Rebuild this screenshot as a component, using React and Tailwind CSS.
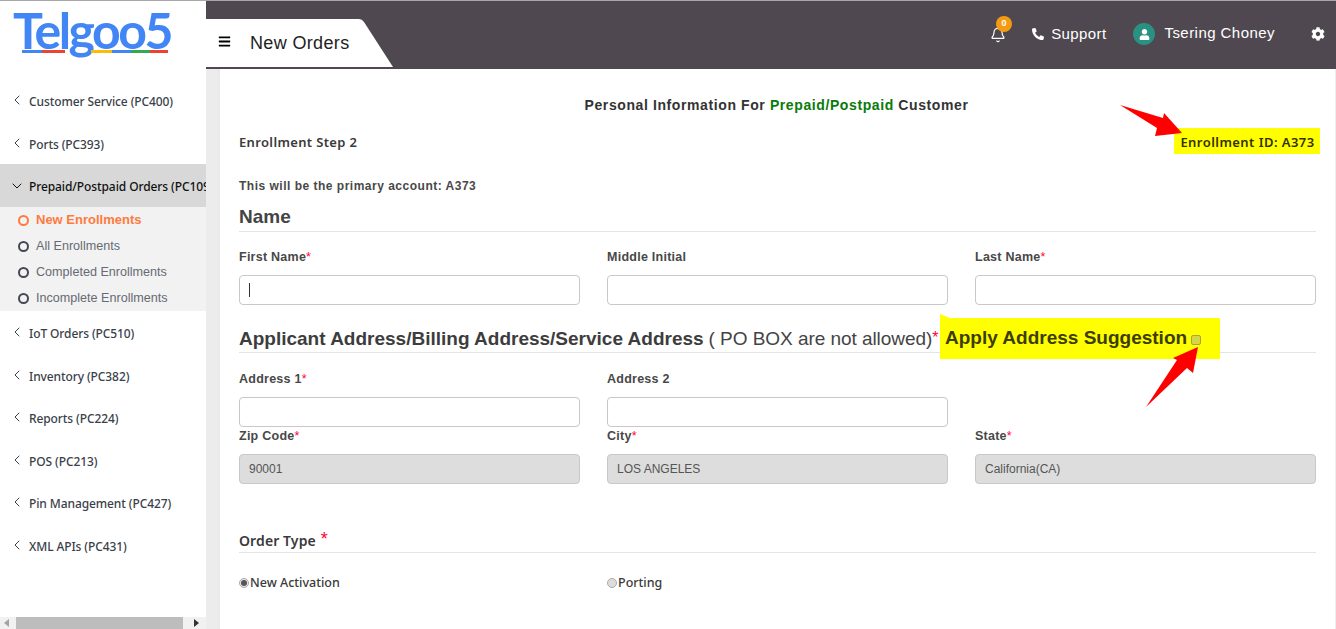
import React from "react";
import { ChevronLeft, ChevronDown, Bell } from "lucide-react";
import { FaBars, FaCog, FaPhoneAlt, FaUser } from "react-icons/fa";

const sans = "font-['Liberation_Sans',Arial,sans-serif]";
const noto = "font-['Noto_Sans',sans-serif]";

function NavItem({ label, open }) {
  return (
    <div className={`flex items-center shrink-0 ${open ? "h-[43px] bg-[#d8d8d8] text-[#111111]" : "h-[42.5px] text-[#3a3f4a]"} pl-[9px] whitespace-nowrap overflow-hidden`}>
      {open ? <ChevronDown size={16} strokeWidth={1.5} className="shrink-0" /> : <ChevronLeft size={16} strokeWidth={1.5} className="shrink-0" />}
      <span className={`${noto} ml-[4px] ${open ? "pt-[2px]" : "pt-[4px]"} text-[12px] font-medium tracking-[-0.1px]`}>{label}</span>
    </div>
  );
}

function SubItem({ label, active }) {
  return (
    <div className={`flex items-center h-[26px] pl-[18px] ${sans} ${active ? "text-[13px] text-[#ff7a3d] font-bold" : "text-[12.6px] text-[#666a73]"}`}>
      <span className={`w-[11px] h-[11px] rounded-full border-2 mr-[7px] ${active ? "border-[#ff7a3d]" : "border-[#444852]"}`} />
      {label}
    </div>
  );
}

function Field({ label, req, value, disabled }) {
  return (
    <div>
      <label className={`block ${sans} text-[12.5px] font-bold tracking-[0.25px] text-[#484848] h-[19px] leading-[19px] mb-[8px]`}>
        {label}{req && <span className="text-[#f03] font-normal">*</span>}
      </label>
      <div className={`h-[30px] rounded-[4px] border border-[#c8c8c8] px-[9px] flex items-center ${sans} text-[12px] text-[#555555] ${disabled ? "bg-[#dddddd]" : "bg-white"}`}>
        {value}
      </div>
    </div>
  );
}

function Arrow({ className, points }) {
  return (
    <svg className={`absolute ${className}`} viewBox="0 0 70 70" width="70" height="70">
      <polygon points={points} fill="#ff0000" />
    </svg>
  );
}

export default function App() {
  return (
    <div className={`relative w-[1336px] h-[629px] overflow-hidden bg-white ${sans}`}>
      <div className="h-px bg-[#a8a8a8]" />
      <div className="flex h-[628px]">
        <aside className="w-[206px] shrink-0 flex flex-col bg-white">
          <div className="h-[78px] shrink-0 relative pl-[13px]">
            <div className="relative inline-block">
              <div className="font-['Lato',sans-serif] font-bold text-[50px] leading-[56px] tracking-[-2.5px] text-[#4285f4] pt-[1px]">Telgoo5</div>
              <div className="absolute left-[9px] top-[49px] flex h-[3px] w-[146px]">
                <span className="w-[20px] bg-[#4285f4]" />
                <span className="w-[23px] bg-[#ea4335]" />
                <span className="w-[26px]" />
                <span className="w-[21px] bg-[#fbbc05]" />
                <span className="w-[19px] bg-[#4285f4]" />
                <span className="w-[19px] bg-[#34a853]" />
                <span className="w-[18px] bg-[#ea4335]" />
              </div>
            </div>
          </div>
          <div className="flex-1 flex flex-col min-h-0">
            <NavItem label="Customer Service (PC400)" />
            <NavItem label="Ports (PC393)" />
            <NavItem label="Prepaid/Postpaid Orders (PC109)" open />
            <div className="bg-[#f2f2f2] h-[104px] shrink-0">
              <SubItem label="New Enrollments" active />
              <SubItem label="All Enrollments" />
              <SubItem label="Completed Enrollments" />
              <SubItem label="Incomplete Enrollments" />
            </div>
            <NavItem label="IoT Orders (PC510)" />
            <NavItem label="Inventory (PC382)" />
            <NavItem label="Reports (PC224)" />
            <NavItem label="POS (PC213)" />
            <NavItem label="Pin Management (PC427)" />
            <NavItem label="XML APIs (PC431)" />
          </div>
          <div className="h-[12px] bg-[#f1f1f1] flex items-center pl-[4px] shrink-0">
            <span className="w-0 h-0 border-y-[4px] border-y-transparent border-r-[5px] border-r-[#a3a3a3]" />
            <span className="w-[167px] h-[12px] bg-[#bdbdbd] ml-[7px]" />
            <span className="ml-[11px] w-0 h-0 border-y-[4px] border-y-transparent border-l-[5px] border-l-[#333333]" />
          </div>
        </aside>

        <div className="flex-1 flex flex-col min-w-0">
          <header className="h-[68px] shrink-0 bg-[#4f4850] flex items-start justify-between">
            <div className="mt-[18px] flex h-[48px]">
              <div className="w-[150px] flex items-center bg-white">
                <FaBars size={13} className="text-black ml-[12px] mb-[4px]" />
                <span className="ml-[19px] text-[18px] tracking-[0.35px] text-[#222222]">New Orders</span>
              </div>
              <svg className="block" width="38" height="48" viewBox="0 0 38 48">
                <path d="M0 0 H3 Q6 0 8 3 L37 48 H0 Z" fill="#ffffff" />
              </svg>
            </div>
            <div className="h-[66px] flex items-center text-white">
              <div className="relative mr-[26px] mt-[1px]">
                <Bell size={16} strokeWidth={1.8} />
                <span className="absolute left-[6px] top-[-11px] w-4 h-4 rounded-full bg-[#f39c12] text-[9px] font-bold flex items-center justify-center">0</span>
              </div>
              <FaPhoneAlt size={12} className="mr-[7px]" />
              <span className="text-[15px] tracking-[0.4px] mr-[27px] mt-[1px]">Support</span>
              <span className="w-[22px] h-[22px] rounded-full bg-[#2a9082] flex items-center justify-center mr-[9px]">
                <FaUser size={11} />
              </span>
              <span className="text-[15px] tracking-[0.45px] mr-[36px] mt-[-2px]">Tsering Choney</span>
              <FaCog size={14} className="mr-[11px] text-white" />
            </div>
          </header>
          <div className="flex-1 flex bg-[#ececec] min-h-0 pl-[12px] pt-0">
            <main className="flex-1 bg-white border-l-2 border-[#e9e9e9] border-r border-r-[#eeeeee] pl-[17px] pr-[19px] min-w-0">
              <div className="pl-[2px]">
              <h1 className="text-center font-bold text-[14px] text-[#333333] tracking-[0.6px] mt-[26px] leading-[20px] -ml-[2px]">
                Personal Information For <span className="text-[#0a7a0a]">Prepaid/Postpaid</span> Customer
              </h1>
              <div className="flex justify-between items-center mt-[13px] h-[26px]">
                <span className={`${noto} text-[13px] font-semibold text-[#3a3a3a] tracking-[0.35px] pt-[4px]`}>Enrollment Step 2</span>
                <span className={`${noto} text-[13px] font-semibold text-[#333300] tracking-[0.45px] bg-[#ffff00] h-[26px] w-[146px] -mr-[4px] pt-[3px] pl-[1px] flex items-center justify-center`}>Enrollment ID: A373</span>
              </div>
              <p className="text-[12px] font-bold tracking-[0.5px] text-[#484848] mt-[19px] leading-[26px] h-[26px]">This will be the primary account: A373</p>
              <h2 className="text-[19px] font-bold text-[#444444] leading-[22px] mt-[7px] pb-[3px] border-b border-[#e4e4e4]">Name</h2>
              <div className="grid grid-cols-3 gap-x-[27px] mt-[16px]">
                <div className="relative">
                  <Field label="First Name" req />
                  <span className="absolute left-[10px] top-[35px] w-px h-[14px] bg-[#333333]" />
                </div>
                <Field label="Middle Initial" />
                <Field label="Last Name" req />
              </div>
              <div className="mt-[19px] h-[29px] border-b border-[#e4e4e4] flex items-center whitespace-nowrap relative">
                <span className="text-[19px] font-bold text-[#3d3d3d] pt-[2px]">Applicant Address/Billing Address/Service Address</span>
                <span className="text-[19px] text-[#444444] ml-[5px] tracking-[-0.05px] pt-[2px]">( PO BOX are not allowed)</span>
                <span className="text-[#f03] text-[16px]">*</span>
                <span className="absolute left-[701px] top-[-6px] w-[280px] h-[41px] bg-[#ffff00] flex items-center pl-[5px]">
                  <svg className="absolute left-0 top-[-4px]" width="10" height="4" viewBox="0 0 10 4"><polygon points="0,0 10,4 0,4" fill="#ffff00" /></svg>
                  <span className="text-[19px] font-bold text-[#3d3d00]">Apply Address Suggestion</span>
                  <span className="ml-[4px] mt-[2px] w-[10px] h-[10px] rounded-[2px] border border-[#a8a830] bg-[#d6d64a]" />
                </span>
              </div>
              <div className="grid grid-cols-3 gap-x-[27px] mt-[17px]">
                <Field label="Address 1" req />
                <Field label="Address 2" />
              </div>
              <div className="grid grid-cols-3 gap-x-[27px]">
                <Field label="Zip Code" req value="90001" disabled />
                <Field label="City" req value="LOS ANGELES" disabled />
                <Field label="State" req value="California(CA)" disabled />
              </div>
              <div className="mt-[45px] h-[24px] border-b border-[#e4e4e4] flex items-start">
                <span className={`${noto} text-[14px] font-semibold text-[#3a3a3a] tracking-[0.1px] leading-[24px]`}>Order Type</span>
                <span className="text-[#f03] text-[18px] ml-[5px] leading-[20px]">*</span>
              </div>
              <div className="grid grid-cols-3 gap-x-[27px] mt-[21px]">
                <label className={`flex items-center ${noto} text-[12.5px] font-medium text-[#3a3a3a]`}>
                  <span className="w-[10px] h-[10px] rounded-full border border-[#aaaaaa] bg-[#e8e8e8] flex items-center justify-center mr-px"><span className="w-[6px] h-[6px] rounded-full bg-[#555555]" /></span>
                  New Activation
                </label>
                <label className={`flex items-center ${noto} text-[12.5px] font-medium text-[#3a3a3a]`}>
                  <span className="w-[10px] h-[10px] rounded-full border border-[#aaaaaa] bg-[#dddddd] mr-px" />
                  Porting
                </label>
              </div>
              </div>
            </main>
          </div>
        </div>
      </div>
      <Arrow className="left-[1119px] top-[104px]" points="1,1 44,14 45,9 63,29 36,32 38,24" />
      <Arrow className="left-[1145px] top-[346px]" points="53,1 48,27 42,22 1,61 32,14 28,12" />
    </div>
  );
}
